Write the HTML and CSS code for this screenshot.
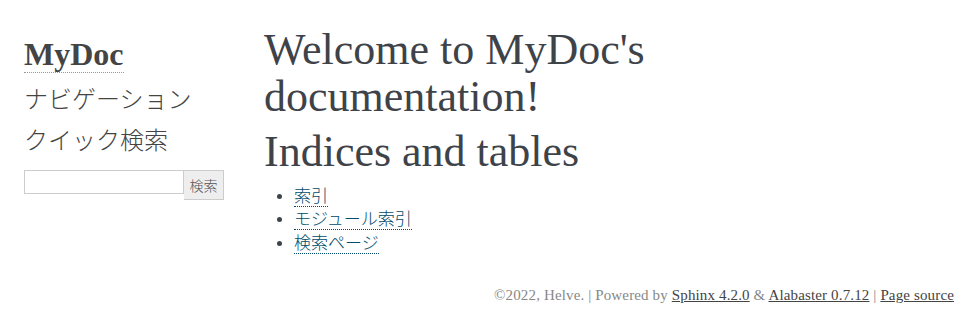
FILE: index.html
```html
<!DOCTYPE html>
<html lang="ja">
<head>
<meta charset="utf-8">
<title>Welcome to MyDoc's documentation! — MyDoc</title>
<link rel="stylesheet" href="styles.css">
</head>
<body>
<div class="document">
  <div class="sphinxsidebar">
    <div class="sidebar-wrap">
      <h1 class="logo"><a href="#">MyDoc</a></h1>
      <h3>ナビゲーション</h3>
      <div class="searchbox">
        <h3>クイック検索</h3>
        <form class="search">
          <input class="search-text" type="text" name="q">
          <input class="search-btn" type="submit" value="検索">
        </form>
      </div>
    </div>
  </div>
  <div class="body">
    <h1>Welcome to MyDoc's documentation!</h1>
    <h1>Indices and tables</h1>
    <ul>
      <li><a href="#">索引</a></li>
      <li><a href="#">モジュール索引</a></li>
      <li><a href="#">検索ページ</a></li>
    </ul>
  </div>
</div>
<div class="footer">©2022, Helve. | Powered by <a href="#">Sphinx 4.2.0</a> &amp; <a href="#">Alabaster 0.7.12</a> | <a href="#">Page source</a></div>
</body>
</html>
```
FILE: styles.css
```css
body {
  margin: 0;
  font-family: "Liberation Serif", "Noto Sans CJK JP", serif;
  font-size: 17px;
  color: #000;
  background: #fff;
}
.document {
  width: 940px;
  margin: 27px auto 0;
  display: flex;
}
.sphinxsidebar {
  width: 220px;
  flex: none;
  font-size: 14px;
}
.sidebar-wrap {
  padding: 21px 10px 18px;
}
.logo {
  margin: -10px 0 12px;
  font-size: 32px;
  line-height: 32px;
  font-weight: bold;
}
.logo a {
  color: #444;
  text-decoration: none;
  border-bottom: 1px dotted #999;
}
.sphinxsidebar h3 {
  margin: 0 0 5px;
  font-size: 24px;
  line-height: 36px;
  font-weight: 300;
  color: #444;
  font-family: "Liberation Serif", "Noto Sans CJK JP", serif;
}
.search {
  display: flex;
  margin: 11px 0 0;
}
.search-text {
  width: 160px;
  height: 24px;
  box-sizing: border-box;
  border: 1px solid #ccc;
  padding: 3px;
  margin: 0;
  font-size: 14px;
  font-family: "Liberation Serif", serif;
  background: #fff;
}
.search-btn {
  width: 40px;
  height: 30px;
  box-sizing: border-box;
  border: 1px solid #ccc;
  border-left: none;
  margin: 0;
  padding: 0;
  background: #eee;
  color: #555;
  font-size: 14px;
  font-weight: 300;
  font-family: "Noto Sans CJK JP", sans-serif;
  border-radius: 0;
}
.body {
  flex: 1;
  padding: 0 30px;
  color: #3E4349;
}
.body h1 {
  font-size: 44px;
  line-height: 46.5px;
  font-weight: normal;
  margin: 0 0 9px;
  color: #3E4349;
}
.body ul {
  margin: 8px 0 10px 30px;
  padding: 0;
}
.body li {
  line-height: 1.4em;
}
.body a {
  color: #004B6B;
  font-weight: 300;
  text-decoration: none;
  border-bottom: 1px dotted #004B6B;
}
.footer {
  width: 940px;
  margin: 21px auto 30px;
  font-size: 15px;
  letter-spacing: 0.14px;
  color: #888;
  text-align: right;
}
.footer a {
  color: #444;
  text-decoration: underline;
}
```
